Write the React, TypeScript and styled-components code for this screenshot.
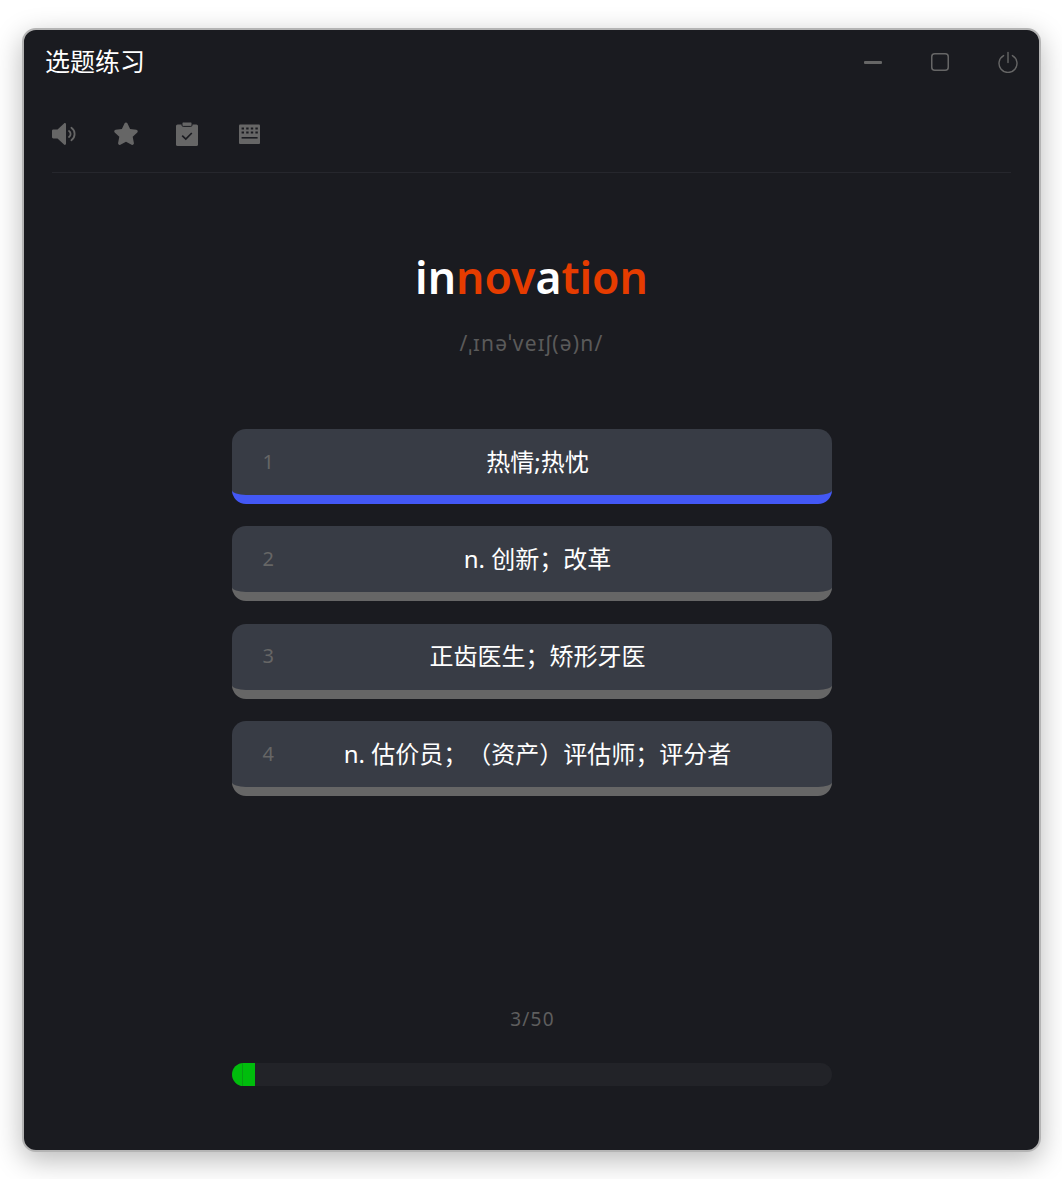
import React from 'react'
import styled, { createGlobalStyle } from 'styled-components'

const options = ['热情;热忱', 'n. 创新；改革', '正齿医生；矫形牙医', 'n. 估价员；（资产）评估师；评分者']

export default function App() {
    return (
        <Page>
            <GlobalStyle />
            <Window>
                <TitleBar>
                    <Title>选题练习</Title>
                    <WindowControls>
                        <svg width="20" height="20" viewBox="0 0 20 20">
                            <rect x="1" y="9" width="18" height="3" rx="1" fill="#666" />
                        </svg>
                        <svg width="20" height="20" viewBox="0 0 20 20" fill="none" stroke="#666" strokeWidth="1.5">
                            <rect x="1.75" y="1.75" width="16.5" height="16.5" rx="3" />
                        </svg>
                        <svg width="22" height="22" viewBox="0 0 22 22" fill="none" stroke="#666" strokeWidth="1.4" strokeLinecap="round">
                            <path d="M11 1.5V11.5" />
                            <path d="M6.6 4.6A9 9 0 1 0 15.4 4.6" />
                        </svg>
                    </WindowControls>
                </TitleBar>
                <Toolbar>
                    <svg width="26" height="26" viewBox="0 0 26 26" fill="#666">
                        <path d="M0 10C0 9.2 .5 8.6 1.3 8.6H5.5L12 2.4C12.7 1.8 14 2.2 14 3.2V22.8C14 23.8 12.7 24.2 12 23.6L5.5 17.4H1.3C.5 17.4 0 16.8 0 16Z" />
                        <path d="M17 10A3.6 3.6 0 0 1 17 16" fill="none" stroke="#666" strokeWidth="1.8" strokeLinecap="round" />
                        <path d="M19.4 6.8A7.6 7.6 0 0 1 19.4 19.2" fill="none" stroke="#666" strokeWidth="1.8" strokeLinecap="round" />
                    </svg>
                    <svg width="26" height="26" viewBox="0 0 26 26" fill="#666">
                        <path d="M13 1.4C13.6 1.4 14.1 1.7 14.4 2.3L17.1 8 23.4 8.8C24.7 9 25.2 10.6 24.3 11.5L19.7 15.8 20.9 22C21.1 23.3 19.8 24.3 18.6 23.7L13 20.7 7.4 23.7C6.2 24.3 4.9 23.3 5.1 22L6.3 15.8 1.7 11.5C.8 10.6 1.3 9 2.6 8.8L8.9 8 11.6 2.3C11.9 1.7 12.4 1.4 13 1.4Z" />
                    </svg>
                    <svg width="26" height="26" viewBox="0 0 26 26">
                        <rect x="2" y="3.4" width="22" height="21.6" rx="1.6" fill="#666" />
                        <rect x="8" y="1" width="10" height="4.4" rx="1.2" fill="#666" stroke="#1a1b20" strokeWidth="1" />
                        <path d="M8.2 14.6L11.8 18L17.8 12" fill="none" stroke="#1a1b20" strokeWidth="1.7" />
                    </svg>
                    <svg width="26" height="26" viewBox="0 0 26 26">
                        <rect x="4" y="3.6" width="21" height="19.4" rx="1" fill="#666" />
                        <path d="M6.6 7.6H23.4M6.6 11.4H23.4" stroke="#1a1b20" strokeWidth="2" strokeDasharray="2.4 2.2" fill="none" />
                        <path d="M6.6 16.8H22.6" stroke="#1a1b20" strokeWidth="1.6" fill="none" />
                    </svg>
                </Toolbar>
                <Word>
                    in<Miss>nov</Miss>a<Miss>tion</Miss>
                </Word>
                <Phonetic>/ˌɪnəˈveɪʃ(ə)n/</Phonetic>
                <OptionList>
                    {options.map((text, index) => (
                        <Option key={text} $selected={index === 0}>
                            <OptionNumber>{index + 1}</OptionNumber>
                            <OptionText>{text}</OptionText>
                        </Option>
                    ))}
                </OptionList>
                <Footer>
                    <Count>3/50</Count>
                    <Track>
                        <Segment $first />
                        <Segment />
                    </Track>
                </Footer>
            </Window>
        </Page>
    )
}

const GlobalStyle = createGlobalStyle`
    html, body {
        margin: 0;
        background: #fff;
    }
    body {
        font-family: "Noto Sans", "Noto Sans CJK SC", sans-serif;
        text-spacing-trim: space-all;
    }
`

const Page = styled.div`
    box-sizing: border-box;
    width: 1062px;
    height: 1179px;
    padding: 28px 21px 27px 22px;
    overflow: hidden;
`

const Window = styled.div`
    box-sizing: border-box;
    display: flex;
    flex-direction: column;
    height: 100%;
    background: #1a1b20;
    border: 2px solid #b4b4b4;
    border-radius: 14px;
    box-shadow: 0 8px 28px rgba(0, 0, 0, 0.28);
`

const TitleBar = styled.div`
    display: flex;
    align-items: center;
    justify-content: space-between;
    height: 64px;
    padding: 0 20px 0 21px;
`

const Title = styled.h1`
    margin: 0 0 3px;
    font-size: 25px;
    line-height: 32px;
    font-weight: 400;
    color: #fff;
`

const WindowControls = styled.div`
    display: flex;
    align-items: center;
    gap: 47px;
`

const Toolbar = styled.div`
    box-sizing: border-box;
    display: flex;
    align-items: center;
    gap: 35px;
    height: 79px;
    padding-top: 2px;
    margin: 0 28px;
    border-bottom: 1px solid #26272d;
`

const Word = styled.div`
    margin-top: 71px;
    font-size: 44.5px;
    line-height: 66px;
    font-weight: 600;
    text-align: center;
    color: #fff;
`

const Miss = styled.span`
    color: #e63c00;
`

const Phonetic = styled.div`
    margin-top: 19px;
    font-size: 21px;
    line-height: 28px;
    letter-spacing: 1.2px;
    text-align: center;
    color: #5a5a5a;
`

const OptionList = styled.div`
    display: flex;
    flex-direction: column;
    gap: 22.4px;
    width: 600px;
    margin: 72px auto 0;
`

const Option = styled.div<{ $selected?: boolean }>`
    box-sizing: border-box;
    display: grid;
    grid-template-columns: 1fr auto 1fr;
    align-items: center;
    height: 75px;
    background: #383c45;
    border-bottom: 9px solid ${(p) => (p.$selected ? '#4358f5' : '#666')};
    border-radius: 14px;
    font-size: 24px;
    color: #fff;
`

const OptionNumber = styled.span`
    padding: 0 0 2px 31px;
    font-size: 20px;
    color: #666;
`

const OptionText = styled.span`
    padding: 0 0 4px 12px;
    white-space: nowrap;
`

const Footer = styled.div`
    display: flex;
    flex-direction: column;
    align-items: center;
    gap: 30px;
    margin-top: auto;
    padding-bottom: 64px;
`

const Count = styled.div`
    padding-left: 2px;
    font-size: 19px;
    line-height: 28px;
    letter-spacing: 1.2px;
    color: #5e5e5e;
`

const Track = styled.div`
    display: flex;
    width: 600px;
    height: 23px;
    background: #222328;
    border-radius: 12px;
    overflow: hidden;
`

const Segment = styled.div<{ $first?: boolean }>`
    box-sizing: border-box;
    width: 11.5px;
    background: #00bd0c;
    border-right: ${(p) => (p.$first ? '1px solid #0a9a14' : 'none')};
`
